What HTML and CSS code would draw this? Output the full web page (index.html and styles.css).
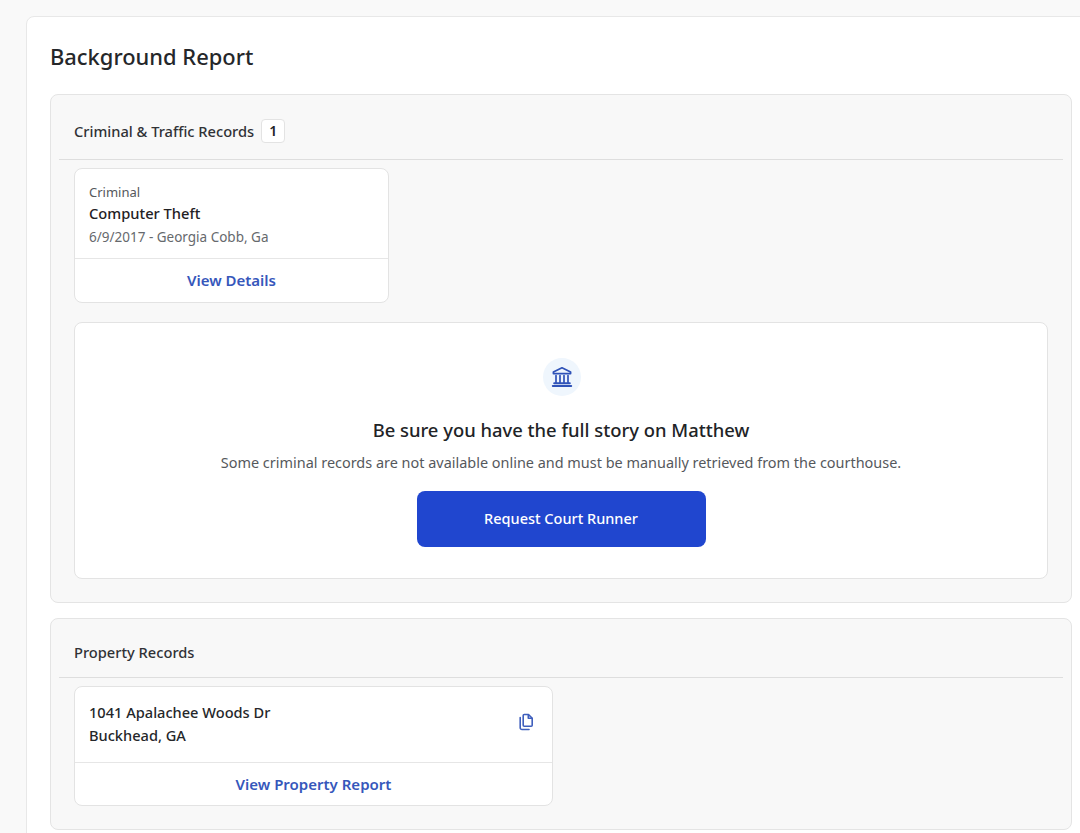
FILE: index.html
```html
<!DOCTYPE html>
<html lang="en">
<head>
<meta charset="utf-8">
<title>Background Report</title>
<link rel="stylesheet" href="styles.css">
</head>
<body>
<main class="page">
  <h1 class="title">Background Report</h1>

  <section class="section">
    <header class="section-head head-criminal">
      <h2 class="section-title">Criminal &amp; Traffic Records</h2>
      <span class="count">1</span>
    </header>
    <div class="section-body">
      <article class="card card-record">
        <div class="record-body">
          <div class="record-type">Criminal</div>
          <div class="record-name">Computer Theft</div>
          <div class="record-meta">6/9/2017 - Georgia Cobb, Ga</div>
        </div>
        <a class="card-link" href="#">View Details</a>
      </article>

      <div class="promo">
        <div class="promo-icon">
          <svg width="22" height="22" viewBox="0 0 22 22" fill="none" stroke="#2f52b8" stroke-width="1.7" stroke-linejoin="round" stroke-linecap="round">
            <path d="M11 1.8 19.6 6v1.6H2.4V6z"/>
            <path d="M5 9.5v7M9 9.5v7M13 9.5v7M17 9.5v7"/>
            <path d="M3.2 17.3h15.6M1.8 20h18.4" stroke-width="2"/>
          </svg>
        </div>
        <h3 class="promo-title">Be sure you have the full story on Matthew</h3>
        <p class="promo-text">Some criminal records are not available online and must be manually retrieved from the courthouse.</p>
        <a class="promo-btn" href="#">Request Court Runner</a>
      </div>
    </div>
  </section>

  <section class="section section-property">
    <header class="section-head head-property">
      <h2 class="section-title">Property Records</h2>
    </header>
    <div class="section-body">
      <article class="card card-property">
        <div class="property-body">
          <div class="address">1041 Apalachee Woods Dr<br>Buckhead, GA</div>
          <svg class="copy-icon" width="16" height="18" viewBox="0 0 16 18" fill="none" stroke="#3f5fbd" stroke-width="1.6" stroke-linejoin="round" stroke-linecap="round">
            <path d="M6.2 1.5h4.3l3.7 3.7v7.1a1 1 0 0 1-1 1H6.2a1 1 0 0 1-1-1V2.5a1 1 0 0 1 1-1z"/>
            <path d="M10.3 1.7v3.6h3.7"/>
            <path d="M2.2 4.6v10.1a1.8 1.8 0 0 0 1.8 1.8h7"/>
          </svg>
        </div>
        <a class="card-link" href="#">View Property Report</a>
      </article>
    </div>
  </section>
</main>
</body>
</html>
```

FILE: styles.css
```css
* { box-sizing: border-box; }

html, body {
  margin: 0;
  height: 833px;
  overflow: hidden;
}

body {
  background: #f9f9f9;
  font-family: "Noto Sans", "Open Sans", sans-serif;
  color: #212326;
  padding: 16px 0 0 26px;
}

.page {
  width: 1080px;
  min-height: 830px;
  background: #fff;
  border: 1px solid #e8e8e8;
  border-radius: 8px 0 0 0;
  padding: 22px 0 0 23px;
}

.title {
  margin: 0 0 19px;
  font-size: 21.9px;
  line-height: 36px;
  font-weight: 500;
  color: #25272a;
}

.section {
  width: 1022px;
  background: #f8f8f8;
  border: 1px solid #e4e4e4;
  border-radius: 8px;
  padding: 0 8px;
}

.section-property { margin-top: 15px; }

.section-head {
  display: flex;
  align-items: center;
  gap: 7px;
  padding: 7px 0 0 15px;
  border-bottom: 1px solid #dedede;
}

.head-criminal { height: 65px; }
.head-property { height: 59px; }

.section-title {
  margin: 0;
  font-size: 14.65px;
  line-height: 20px;
  font-weight: 500;
  color: #303236;
}

.count {
  display: flex;
  align-items: center;
  justify-content: center;
  width: 24px;
  height: 24px;
  background: #fff;
  border: 1px solid #e3e3e3;
  border-radius: 4px;
  font-size: 14px;
  font-weight: 600;
  color: #212326;
}

.section-body {
  padding: 8px 15px 23px;
}

.card {
  display: flex;
  flex-direction: column;
  background: #fff;
  border: 1px solid #e3e3e3;
  border-radius: 8px;
}

.card-record { width: 315px; height: 135px; }
.card-property { width: 479px; height: 120px; }

.record-body {
  height: 90px;
  padding: 14px 14px 0;
  border-bottom: 1px solid #e6e6e6;
}

.record-type {
  font-size: 13px;
  line-height: 18px;
  color: #55585c;
}

.record-name {
  margin-top: 2px;
  font-size: 14.7px;
  line-height: 20px;
  font-weight: 500;
  color: #1f2124;
}

.record-meta {
  margin-top: 5px;
  font-size: 13.5px;
  line-height: 18px;
  color: #66696d;
}

.card-link {
  flex: 1;
  display: flex;
  align-items: center;
  justify-content: center;
  padding-bottom: 1px;
  font-size: 15px;
  font-weight: 600;
  color: #3657bb;
  text-decoration: none;
}

.promo {
  display: flex;
  flex-direction: column;
  align-items: center;
  height: 257px;
  margin-top: 19px;
  background: #fff;
  border: 1px solid #e3e3e3;
  border-radius: 8px;
  padding-top: 35px;
}

.promo-icon {
  display: flex;
  align-items: center;
  justify-content: center;
  width: 38px;
  height: 38px;
  margin-left: 1px;
  border-radius: 50%;
  background: #eff6fd;
}

.promo-title {
  margin: 21px 0 0;
  font-size: 18.4px;
  line-height: 26px;
  font-weight: 500;
  color: #212326;
}

.promo-text {
  margin: 10px 0 0;
  font-size: 14.45px;
  line-height: 20px;
  color: #55585c;
}

.promo-btn {
  display: flex;
  align-items: center;
  justify-content: center;
  width: 289px;
  height: 56px;
  margin-top: 18px;
  padding-bottom: 2px;
  background: #2046cf;
  border-radius: 8px;
  font-size: 14.5px;
  font-weight: 500;
  color: #fff;
  text-decoration: none;
}

.property-body {
  display: flex;
  justify-content: space-between;
  height: 76px;
  padding: 14px 18px 0 14px;
  border-bottom: 1px solid #e6e6e6;
}

.address {
  font-size: 14.6px;
  line-height: 23px;
  font-weight: 500;
  color: #25272a;
}

.copy-icon { margin-top: 12px; }
```
